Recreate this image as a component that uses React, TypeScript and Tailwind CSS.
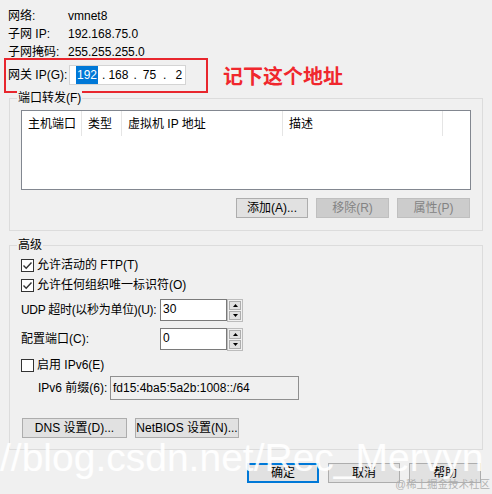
import React from 'react';

const Check = ({ checked }: { checked: boolean }) => (
  <span className="flex h-[13px] w-[13px] shrink-0 items-center justify-center border border-[#333333] bg-white">
    {checked && (
      <svg width="11" height="11" viewBox="0 0 11 11">
        <path d="M1.5 5.5 L4.2 8.2 L9.5 2.5" fill="none" stroke="#333333" strokeWidth="1.4" />
      </svg>
    )}
  </span>
);

const Btn = ({ label, w, disabled, primary }: { label: string; w: string; disabled?: boolean; primary?: boolean }) => (
  <div
    className={`flex h-[20px] items-center justify-center whitespace-nowrap ${w} ${
      primary
        ? 'border-2 border-[#0078d7] bg-[#e1e1e1]'
        : disabled
        ? 'border border-[#bfbfbf] bg-[#cccccc] text-[#838383]'
        : 'border border-[#adadad] bg-[#e1e1e1]'
    }`}
  >
    {label}
  </div>
);

const Spin = ({ value }: { value: string }) => (
  <div className="flex items-start">
    <div className="h-[22px] w-[67px] border border-[#7a7a7a] bg-white pl-[2px] pt-[1px] leading-[16px]">{value}</div>
    <div className="flex h-[23px] w-[16px] flex-col gap-[1px] border border-[#bcbcbc] p-[1px]">
      <div className="flex flex-1 items-center justify-center border border-[#adadad] bg-[#e1e1e1]">
        <svg width="5" height="3" viewBox="0 0 5 3"><path d="M0 3 L2.5 0 L5 3 Z" fill="#000" /></svg>
      </div>
      <div className="flex flex-1 items-center justify-center border border-[#adadad] bg-[#e1e1e1]">
        <svg width="5" height="3" viewBox="0 0 5 3"><path d="M0 0 L5 0 L2.5 3 Z" fill="#000" /></svg>
      </div>
    </div>
  </div>
);

const App: React.FC = () => {
  return (
    <div className="relative h-[494px] w-[492px] overflow-hidden bg-[#f0f0f0] font-['Liberation_Sans','Noto_Sans_CJK_SC',sans-serif] text-[12px] text-black">
      {/* network info */}
      <div className="pl-[8px] pt-[7px]">
        {[
          ['网络:', 'vmnet8'],
          ['子网 IP:', '192.168.75.0'],
          ['子网掩码:', '255.255.255.0'],
        ].map(([k, v]) => (
          <div key={k} className="flex h-[18px] items-center">
            <span className="w-[60px]">{k}</span>
            <span>{v}</span>
          </div>
        ))}
      </div>

      <div className="mt-[4px] flex h-[20px] items-center pl-[8px]">
        <span className="w-[61px]">网关 IP(G):</span>
        <div className="flex h-[20px] w-[117px] items-center border border-[#d4d4d4] bg-white pl-[6px]">
          <span className="bg-[#0078d7] px-[1px] text-white">192</span>
          <span className="ml-[4px]">.</span>
          <span className="ml-[3px]">168</span>
          <span className="ml-[5px]">.</span>
          <span className="ml-[6px]">75</span>
          <span className="ml-[7px]">.</span>
          <span className="ml-[9px]">2</span>
        </div>
      </div>

      {/* annotation */}
      <div className="absolute left-[4px] top-[58px] h-[35px] w-[204px] border-2 border-[#e8262d]" />
      <div className="absolute left-[223px] top-[66px] text-[20px] font-bold leading-[22px] text-[#f0272d]">记下这个地址</div>

      {/* port forwarding */}
      <div className="relative ml-[9px] mt-[13px] w-[474px] border border-[#dcdcdc] px-[11px] pb-[12px] pt-[11px]">
        <span className="absolute -top-[9px] left-[7px] bg-[#f0f0f0] px-[1px] leading-[16px]">端口转发(F)</span>
        <div className="h-[80px] border border-[#828790] bg-white">
          <div className="flex h-[25px] items-center">
            <div className="flex h-full w-[60px] items-center border-r border-[#e5e5e5] pl-[6px]">主机端口</div>
            <div className="flex h-full w-[40px] items-center border-r border-[#e5e5e5] pl-[6px]">类型</div>
            <div className="flex h-full w-[161px] items-center border-r border-[#e5e5e5] pl-[6px]">虚拟机 IP 地址</div>
            <div className="flex h-full w-[160px] items-center border-r border-[#e5e5e5] pl-[6px]">描述</div>
          </div>
        </div>
        <div className="mr-[1px] mt-[8px] flex justify-end gap-[8px]">
          <Btn label="添加(A)..." w="w-[72px]" />
          <Btn label="移除(R)" w="w-[73px]" disabled />
          <Btn label="属性(P)" w="w-[73px]" disabled />
        </div>
      </div>

      {/* advanced */}
      <div className="relative ml-[9px] mt-[14px] w-[474px] border border-[#dcdcdc] pb-[11px] pl-[11px] pt-[9px]">
        <span className="absolute -top-[9px] left-[7px] bg-[#f0f0f0] px-[1px] leading-[16px]">高级</span>
        <div className="flex h-[20px] items-center gap-[3px]">
          <Check checked />
          <span>允许活动的 FTP(T)</span>
        </div>
        <div className="flex h-[20px] items-center gap-[3px]">
          <Check checked />
          <span>允许任何组织唯一标识符(O)</span>
        </div>
        <div className="mt-[4px] flex h-[22px] items-center">
          <span className="w-[139px] shrink-0 whitespace-nowrap tracking-[-0.3px]">UDP 超时(以秒为单位)(U):</span>
          <Spin value="30" />
        </div>
        <div className="mt-[7px] flex h-[22px] items-center">
          <span className="w-[139px] shrink-0 whitespace-nowrap">配置端口(C):</span>
          <Spin value="0" />
        </div>
        <div className="mt-[5px] flex h-[20px] items-center gap-[3px]">
          <Check checked={false} />
          <span>启用 IPv6(E)</span>
        </div>
        <div className="mt-[1px] flex h-[24px] items-center">
          <span className="w-[89px] shrink-0 whitespace-nowrap pl-[17px]">IPv6 前缀(6):</span>
          <div className="flex h-[24px] w-[189px] items-center border border-[#8f8f8f] bg-[#f0f0f0] pl-[2px]">
            fd15:4ba5:5a2b:1008::/64
          </div>
        </div>
        <div className="ml-[1px] mt-[18px] flex gap-[8px]">
          <Btn label="DNS 设置(D)..." w="w-[105px]" />
          <Btn label="NetBIOS 设置(N)..." w="w-[104px]" />
        </div>
      </div>

      <div className="mt-[13px] flex justify-end gap-[9px] pr-[11px]">
        <Btn label="确定" w="w-[72px]" primary />
        <Btn label="取消" w="w-[72px]" />
        <Btn label="帮助" w="w-[72px]" />
      </div>

      {/* watermarks */}
      <div className="pointer-events-none absolute left-0 top-[438px] whitespace-nowrap font-['Liberation_Sans',sans-serif] text-[39px] leading-[39px] text-white/90">
        //blog.csdn.net/Rec_Mervyn
      </div>
      <div className="pointer-events-none absolute right-[2px] top-[477px] whitespace-nowrap text-[10.5px] leading-[14px] text-[#b0b0b0]">
        @稀土掘金技术社区
      </div>
    </div>
  );
};

export default App;
